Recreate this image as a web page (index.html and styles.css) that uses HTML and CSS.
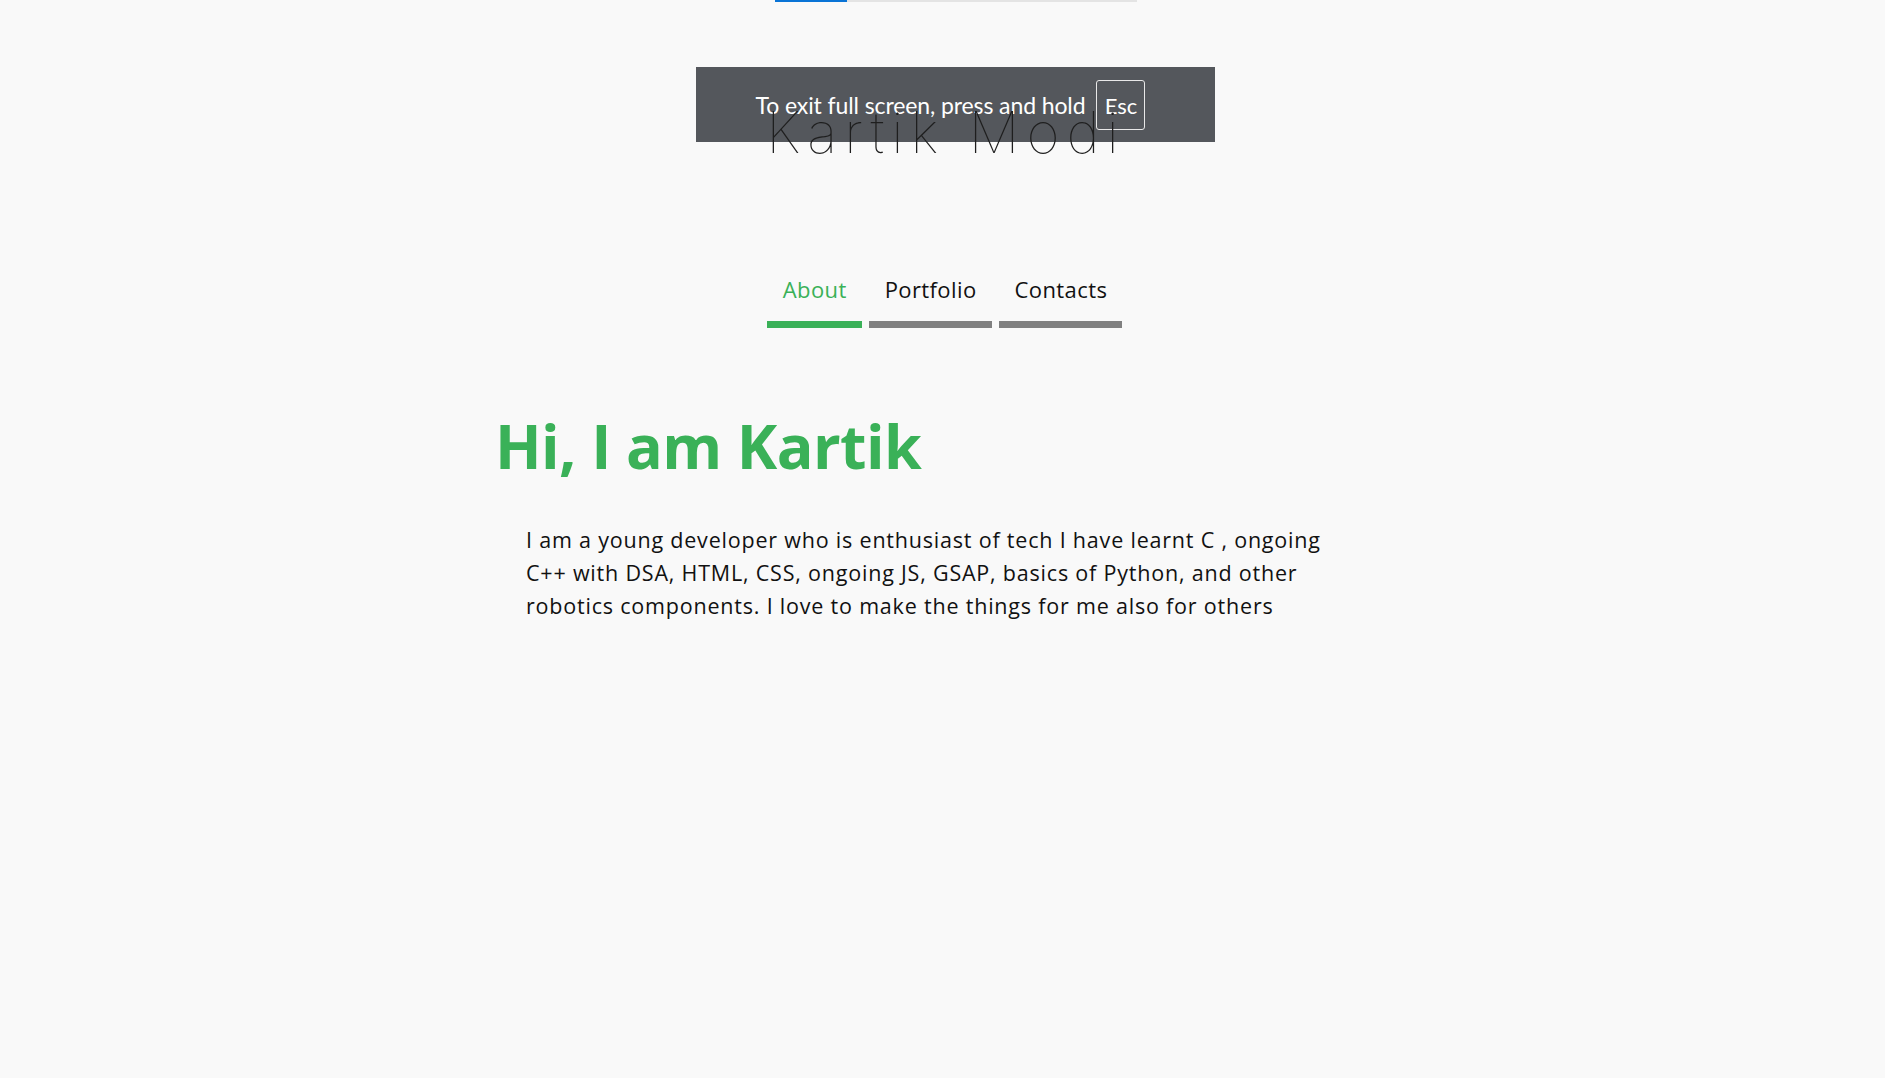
FILE: index.html
```html
<!DOCTYPE html>
<html lang="en">
<head>
<meta charset="utf-8">
<title>Kartik Modi</title>
<link rel="stylesheet" href="styles.css">
</head>
<body>
  <div class="load-track"><div class="load-fill"></div></div>
  <div class="fs-banner">
    <span class="fs-text">To exit full screen, press and hold</span>
    <span class="fs-key">Esc</span>
  </div>

  <header class="site-header">
    <h1 class="brand">Kartik Modi</h1>
    <nav class="tabs">
      <a class="tab tab-active" href="#">About</a>
      <a class="tab" href="#">Portfolio</a>
      <a class="tab" href="#">Contacts</a>
    </nav>
  </header>

  <main class="about">
    <h2 class="about-title">Hi, I am Kartik</h2>
    <p class="about-text">I am a young developer who is enthusiast of tech I have learnt C , ongoing C++ with DSA, HTML, CSS, ongoing JS, GSAP, basics of Python, and other robotics components. I love to make the things for me also for others</p>
  </main>
</body>
</html>
```

FILE: styles.css
```css
html, body {
  margin: 0;
  padding: 0;
}

body {
  background: #f9f9f9;
  font-family: "Open Sans", "Noto Sans", sans-serif;
  color: #111;
  min-height: 1078px;
}

.load-track {
  position: absolute;
  top: 0;
  left: 775px;
  width: 362px;
  height: 2px;
  background: #e4e4e4;
}

.load-fill {
  width: 72px;
  height: 100%;
  background: #0a74d6;
}

.fs-banner {
  position: absolute;
  top: 67px;
  left: 696px;
  width: 509px;
  height: 75px;
  padding-right: 10px;
  background: #54575c;
  display: flex;
  align-items: center;
  justify-content: center;
  gap: 11px;
  z-index: 1;
  color: #fff;
  font-family: "Lato", "Open Sans", sans-serif;
}

.fs-text {
  font-size: 23px;
  letter-spacing: -0.1px;
}

.fs-key {
  display: flex;
  align-items: center;
  justify-content: center;
  width: 47px;
  height: 48px;
  border: 1px solid #e8e8e8;
  border-radius: 3px;
  font-size: 22px;
  margin-top: 1px;
}

.site-header {
  display: flex;
  flex-direction: column;
  align-items: center;
}

.brand {
  position: relative;
  z-index: 2;
  margin: 0 0 0 7px;
  padding-top: 99px;
  font-family: "Inter", "Lato", sans-serif;
  font-weight: 100;
  font-size: 57px;
  line-height: 1.2;
  letter-spacing: 7px;
  color: #1e1e1e;
}

.tabs {
  display: flex;
  gap: 7px;
  margin-top: 106px;
  margin-left: 4px;
}

.tab {
  display: block;
  padding: 0 15px 15px 16px;
  font-size: 22px;
  line-height: 33px;
  letter-spacing: 0.4px;
  color: #111;
  text-decoration: none;
  border-bottom: 7px solid #808080;
}

.tab-active {
  color: #3ab158;
  border-bottom-color: #3ab158;
}

.about {
  width: 891px;
  margin: 0 auto;
}

.about-title {
  margin: 81px 0 0 -2px;
  font-size: 61px;
  line-height: 1.2;
  font-weight: 700;
  color: #3ab158;
  letter-spacing: -0.6px;
}

.about-text {
  margin: 40px 0 0;
  padding: 0 29px;
  font-size: 21.5px;
  line-height: 33px;
  letter-spacing: 0.8px;
  color: #111;
}
```
